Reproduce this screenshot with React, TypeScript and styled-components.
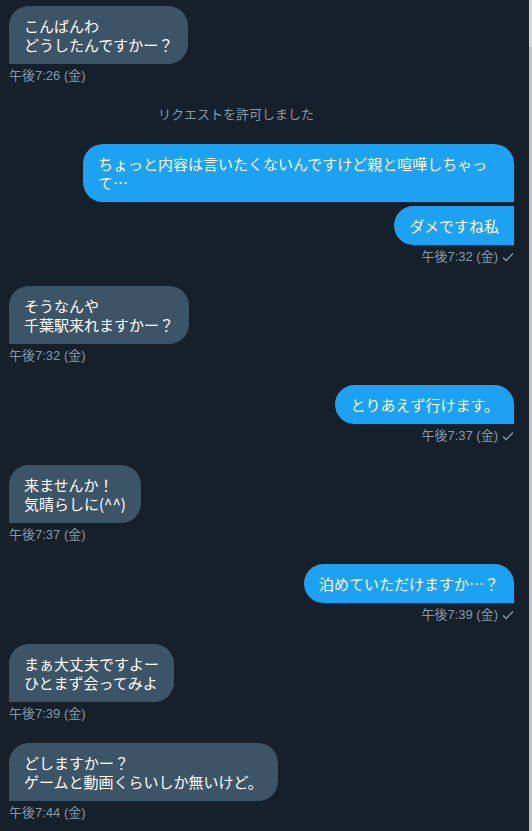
import React from "react";
import styled, { createGlobalStyle } from "styled-components";

const Global = createGlobalStyle`
  html, body { margin: 0; padding: 0; background: #15202b; }
  body { font-family: "Noto Sans CJK JP", "Noto Sans", sans-serif; }
`;

const Page = styled.div`
  display: flex;
  height: 831px;
  overflow: hidden;
  background: #15202b;
`;

const Thread = styled.div`
  flex: 1;
  display: flex;
  flex-direction: column;
  gap: 21px;
  padding: 6px 15px 0 9px;
`;

const Scrollbar = styled.div`
  width: 3px;
  background: #c4c4c4;
  display: flex;
  flex-direction: column;
`;

const Thumb = styled.div`
  height: 47px;
  background: #d6d6d6;
`;

const Group = styled.div<{ $mine?: boolean }>`
  display: flex;
  flex-direction: column;
  align-items: ${(p) => (p.$mine ? "flex-end" : "flex-start")};
  gap: 4px;
`;

type Pos = "single" | "first" | "last";

const radius = (mine: boolean, pos: Pos) => {
  const r = "20px";
  if (!mine) return `${r} ${r} ${r} 0`;
  if (pos === "last") return `${r} 0 0 ${r}`;
  return `${r} ${r} 0 ${r}`;
};

const Bubble = styled.div<{ $mine?: boolean; $pos?: Pos }>`
  box-sizing: border-box;
  max-width: 431px;
  padding: 10px 15px;
  font-size: 15px;
  line-height: 19px;
  color: #ffffff;
  white-space: pre-wrap;
  background: ${(p) => (p.$mine ? "#1da1f2" : "#3d5466")};
  border-radius: ${(p) => radius(!!p.$mine, p.$pos || "single")};
`;

const Meta = styled.div`
  display: flex;
  align-items: center;
  gap: 4px;
  font-family: "Liberation Sans", "Noto Sans CJK JP", sans-serif;
  font-size: 13px;
  line-height: 16px;
  color: #8899a6;
`;

const SystemNote = styled.div`
  text-align: center;
  font-size: 13px;
  line-height: 18px;
  color: #8899a6;
  padding-right: 51px;
`;

const Check = () => (
  <svg width="12" height="10" viewBox="0 0 12 10" fill="none">
    <polyline points="1,5.5 4.2,8.5 11,1.5" stroke="#8899a6" strokeWidth="1.3" />
  </svg>
);

type Msg = { mine?: boolean; texts: string[]; time: string };

const items: (Msg | string)[] = [
  { texts: ["こんばんわ\nどうしたんですかー？"], time: "午後7:26 (金)" },
  "リクエストを許可しました",
  {
    mine: true,
    texts: ["ちょっと内容は言いたくないんですけど親と喧嘩しちゃって…", "ダメですね私"],
    time: "午後7:32 (金)",
  },
  { texts: ["そうなんや\n千葉駅来れますかー？"], time: "午後7:32 (金)" },
  { mine: true, texts: ["とりあえず行けます。"], time: "午後7:37 (金)" },
  { texts: ["来ませんか！\n気晴らしに(^^)"], time: "午後7:37 (金)" },
  { mine: true, texts: ["泊めていただけますか…？"], time: "午後7:39 (金)" },
  { texts: ["まぁ大丈夫ですよー\nひとまず会ってみよ"], time: "午後7:39 (金)" },
  { texts: ["どしますかー？\nゲームと動画くらいしか無いけど。"], time: "午後7:44 (金)" },
];

export default function App() {
  return (
    <Page>
      <Global />
      <Thread>
        {items.map((it, i) => {
          if (typeof it === "string") return <SystemNote key={i}>{it}</SystemNote>;
          const n = it.texts.length;
          return (
            <Group key={i} $mine={it.mine}>
              {it.texts.map((t, j) => (
                <Bubble
                  key={j}
                  $mine={it.mine}
                  $pos={n === 1 ? "single" : j === 0 ? "first" : "last"}
                >
                  {t}
                </Bubble>
              ))}
              <Meta>
                {it.time}
                {it.mine && <Check />}
              </Meta>
            </Group>
          );
        })}
      </Thread>
      <Scrollbar>
        <Thumb />
      </Scrollbar>
    </Page>
  );
}
